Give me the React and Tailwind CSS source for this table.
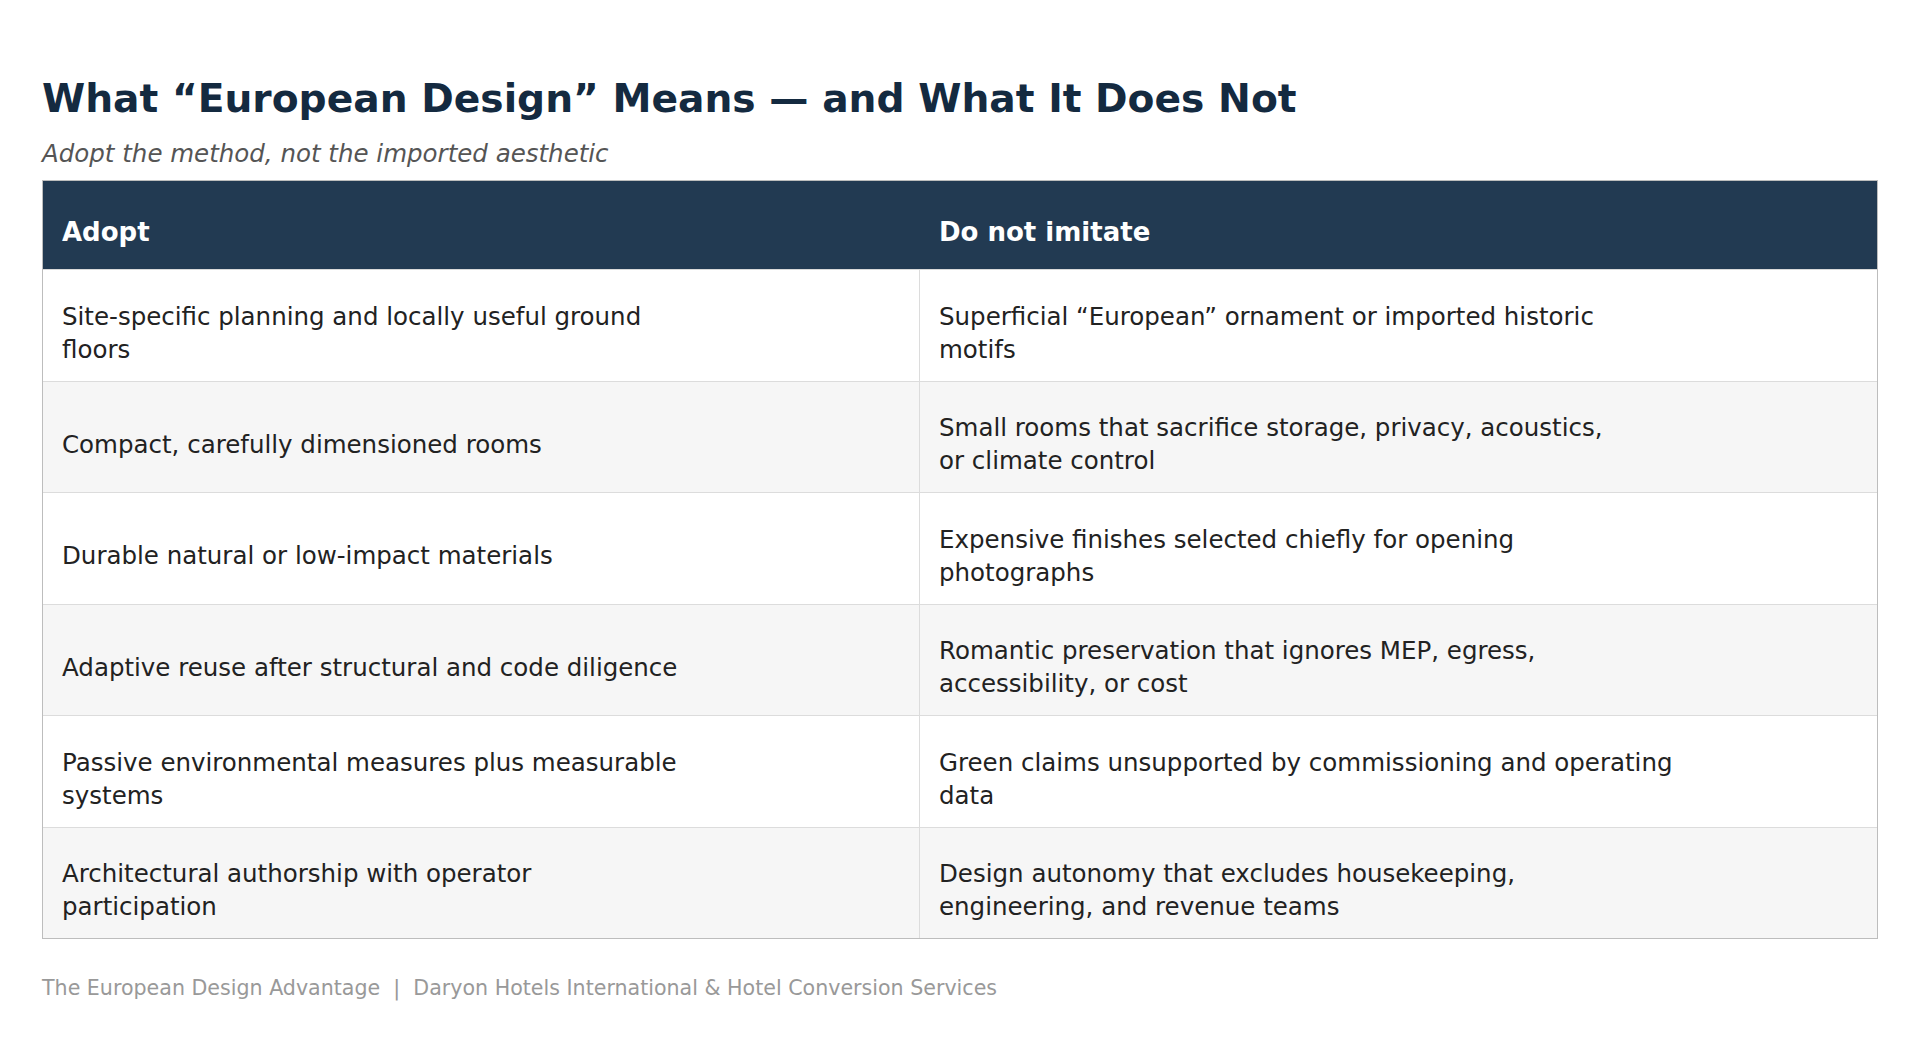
import React from "react";

const rows = [
  {
    adopt: ["Site-specific planning and locally useful ground", "floors"],
    avoid: ["Superficial “European” ornament or imported historic", "motifs"],
  },
  {
    adopt: ["Compact, carefully dimensioned rooms"],
    avoid: ["Small rooms that sacrifice storage, privacy, acoustics,", "or climate control"],
  },
  {
    adopt: ["Durable natural or low-impact materials"],
    avoid: ["Expensive finishes selected chiefly for opening", "photographs"],
  },
  {
    adopt: ["Adaptive reuse after structural and code diligence"],
    avoid: ["Romantic preservation that ignores MEP, egress,", "accessibility, or cost"],
  },
  {
    adopt: ["Passive environmental measures plus measurable", "systems"],
    avoid: ["Green claims unsupported by commissioning and operating", "data"],
  },
  {
    adopt: ["Architectural authorship with operator", "participation"],
    avoid: ["Design autonomy that excludes housekeeping,", "engineering, and revenue teams"],
  },
];

function Lines({ lines }) {
  return (
    <div>
      {lines.map((l, i) => (
        <div key={i}>{l}</div>
      ))}
    </div>
  );
}

export default function App() {
  return (
    <div
      className="min-h-[1062px] bg-white px-[42px] pt-[75px]"
      style={{ fontFamily: '"DejaVu Sans", "Liberation Sans", sans-serif' }}
    >
      <h1 className="text-[39.2px] leading-[48px] font-bold text-[#142a40]">
        What “European Design” Means — and What It Does Not
      </h1>
      <p className="mt-[14px] text-[24.5px] leading-[33px] italic text-[#555555]">
        Adopt the method, not the imported aesthetic
      </p>

      <div className="mt-[10px] border border-[#bdbdbd]">
        <div className="grid grid-cols-[877px_1fr] bg-[#223a52] border-b border-[#d9d9d9] text-white font-bold text-[26px] leading-[35px]">
          <div className="pl-[19px] pr-[19px] pt-[34px] pb-[19px]">Adopt</div>
          <div className="pl-[19px] pr-[19px] pt-[34px] pb-[19px]">Do not imitate</div>
        </div>
        {rows.map((r, i) => (
          <div
            key={i}
            className={
              "grid grid-cols-[877px_1fr] text-[24.5px] leading-[33px] text-[#222222] " +
              (i % 2 === 1 ? "bg-[#f6f6f6] " : "bg-white ") +
              (i < rows.length - 1 ? "border-b border-[#dcdcdc]" : "")
            }
          >
            <div className="flex flex-col justify-center border-r border-[#dcdcdc] pl-[19px] pr-[19px] pt-[29.5px] pb-[15px]">
              <Lines lines={r.adopt} />
            </div>
            <div className="flex flex-col justify-center pl-[19px] pr-[19px] pt-[29.5px] pb-[15px]">
              <Lines lines={r.avoid} />
            </div>
          </div>
        ))}
      </div>

      <p className="mt-[35px] text-[20.6px] leading-[28px] text-[#999999] whitespace-pre">
        {"The European Design Advantage  |  Daryon Hotels International & Hotel Conversion Services"}
      </p>
    </div>
  );
}
